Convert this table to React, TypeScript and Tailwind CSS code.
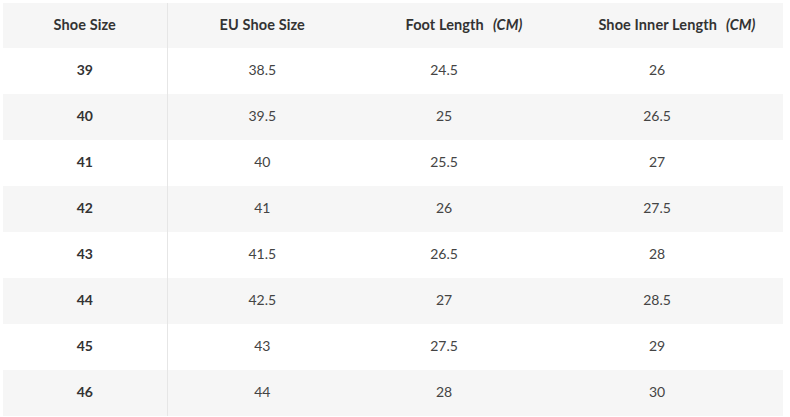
const rows = [
  ['39', '38.5', '24.5', '26'],
  ['40', '39.5', '25', '26.5'],
  ['41', '40', '25.5', '27'],
  ['42', '41', '26', '27.5'],
  ['43', '41.5', '26.5', '28'],
  ['44', '42.5', '27', '28.5'],
  ['45', '43', '27.5', '29'],
  ['46', '44', '28', '30'],
]

const App = () => {
  return (
    <div className="w-[790px] h-[417px] bg-white p-[3px] text-[#333]" style={{ fontFamily: 'Lato, "Noto Sans", sans-serif' }}>
      <table className="w-[780px] table-fixed border-collapse">
        <colgroup>
          <col className="w-[164px]" />
          <col className="w-[190px]" />
          <col className="w-[174px]" />
          <col className="w-[252px]" />
        </colgroup>
        <thead>
          <tr className="h-[45px] bg-[#f6f6f6] text-[14.5px] font-bold tracking-[0.1px]">
            <th className="border-r border-[#e6e6e6] text-center pb-[2px]">Shoe Size</th>
            <th className="text-center pb-[2px]">EU Shoe Size</th>
            <th className="text-center pl-[40px] pb-[2px]">
              Foot Length<i className="ml-[9px] font-bold">(CM)</i>
            </th>
            <th className="text-center pl-[40px] pb-[2px]">
              Shoe Inner Length<i className="ml-[9px] font-bold">(CM)</i>
            </th>
          </tr>
        </thead>
        <tbody>
          {rows.map((r, i) => (
            <tr key={r[0]} className={`h-[46px] text-[14px] ${i % 2 === 0 ? 'bg-white' : 'bg-[#f6f6f6]'}`}>
              <td className="border-r border-[#e6e6e6] text-center font-bold pb-[3px]">{r[0]}</td>
              <td className="text-center text-[#444] pb-[3px]">{r[1]}</td>
              <td className="text-center text-[#444] pb-[3px]">{r[2]}</td>
              <td className="text-center text-[#444] pb-[3px]">{r[3]}</td>
            </tr>
          ))}
        </tbody>
      </table>
    </div>
  )
}

export default App
